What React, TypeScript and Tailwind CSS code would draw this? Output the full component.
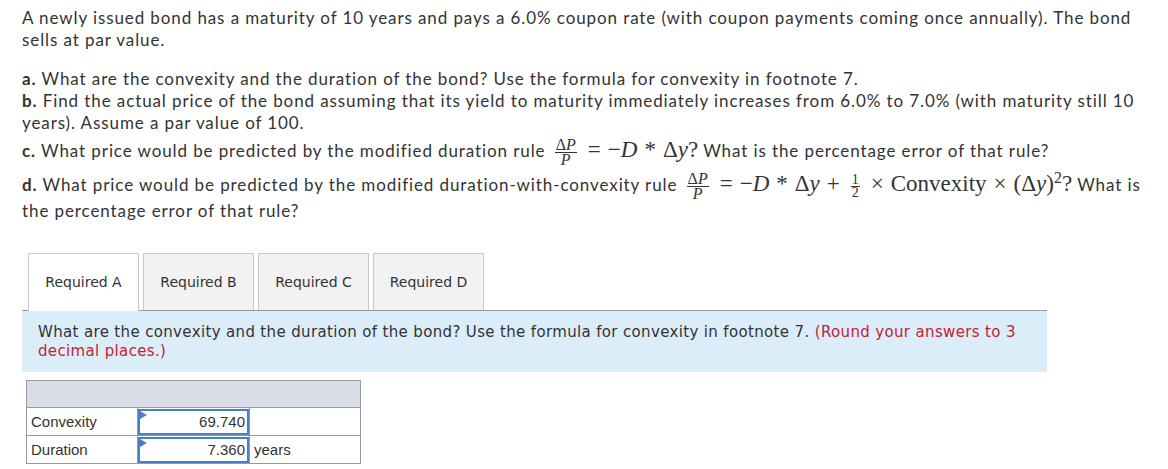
import React from "react";

const sans = "font-['Lato','Liberation_Sans',sans-serif]";
const serif = "font-['Liberation_Serif','DejaVu_Serif',serif]";

function Frac({ top, bottom, small = false }: { top: React.ReactNode; bottom: React.ReactNode; small?: boolean }) {
  return (
    <span
      className={`inline-flex flex-col items-center align-middle mx-[4px] tracking-normal ${serif} ${
        small ? "text-[14px] leading-[12px]" : "text-[16px] leading-[14px]"
      }`}
    >
      <span className="border-b border-[#333] px-[1px]">{top}</span>
      <span className="px-[1px]">{bottom}</span>
    </span>
  );
}

function DeltaP() {
  return <Frac top={<>Δ<i>P</i></>} bottom={<i>P</i>} />;
}

function Op({ children }: { children: React.ReactNode }) {
  return <span className="mx-[7px]">{children}</span>;
}

const TABS = ["Required A", "Required B", "Required C", "Required D"];

export default function App() {
  return (
    <div className="w-[1168px] h-[469px] overflow-hidden bg-white text-[#333]">
      <div className={`pl-[22px] pr-[10px] pt-[7px] text-[17px] leading-[22px] tracking-[0.9px] ${sans}`}>
        <p>
          A newly issued bond has a maturity of 10 years and pays a 6.0% coupon rate (with coupon payments coming once annually). The bond
          <br />
          sells at par value.
        </p>

        <div className="mt-[17px]">
          <div className="whitespace-nowrap">
            <b>a.</b> What are the convexity and the duration of the bond? Use the formula for convexity in footnote 7.
          </div>
          <div className="whitespace-nowrap">
            <b>b.</b> Find the actual price of the bond assuming that its yield to maturity immediately increases from 6.0% to 7.0% (with maturity still 10
          </div>
          <div>years). Assume a par value of 100.</div>
          <div className="leading-[32px] whitespace-nowrap">
            <b>c.</b> What price would be predicted by the modified duration rule <DeltaP />
            <span className={`${serif} text-[23px] tracking-normal`}>
              <Op>=</Op>−<i>D</i>
              <Op>*</Op>Δ<i>y</i>?
            </span>{" "}
            What is the percentage error of that rule?
          </div>
          <div className="leading-[33px] whitespace-nowrap">
            <b>d.</b> What price would be predicted by the modified duration-with-convexity rule <DeltaP />
            <span className={`${serif} text-[23px] tracking-normal`}>
              <Op>=</Op>−<i>D</i>
              <Op>*</Op>Δ<i>y</i>
              <Op>+</Op>
            </span>
            <Frac top="1" bottom="2" small />
            <span className={`${serif} text-[23px] tracking-normal`}>
              <Op>×</Op>Convexity<Op>×</Op>(Δ<i>y</i>)<sup className="text-[16px]">2</sup>?
            </span>{" "}
            What is
          </div>
          <div className="leading-[20px]">the percentage error of that rule?</div>
        </div>
      </div>

      <div className="mt-[32px] pl-[22px] font-['DejaVu_Sans','Verdana',sans-serif]">
        <div className="flex gap-[4px] pl-[6px] relative z-10">
          {TABS.map((t, i) => (
            <div
              key={t}
              className={`w-[111px] flex items-center justify-center text-[14px] border border-b-0 border-[#c8c8c8] ${
                i === 0 ? "bg-white -mb-px h-[58px]" : "bg-[#f2f2f2] h-[57px]"
              }`}
            >
              {t}
            </div>
          ))}
        </div>
        <div className="w-[1025px] border-t border-[#999] bg-[#dbedf9] pl-[16px] pr-[18px] pt-[12px] pb-[11px] text-[15px] tracking-[0.35px] leading-[19px] text-[#333]">
          What are the convexity and the duration of the bond? Use the formula for convexity in footnote 7.{" "}
          <span className="text-[#c8202f]">(Round your answers to 3 decimal places.)</span>
        </div>
      </div>

      <table className="mt-[8px] ml-[26px] border-collapse font-['Liberation_Sans',Arial,sans-serif] text-[15px] text-[#333]">
        <tbody>
          <tr className="h-[27px] bg-[#d9dde7]">
            <td colSpan={3} className="border border-[#999]" />
          </tr>
          <tr className="h-[28px]">
            <td className="w-[111px] border border-[#999] pl-[4px]">Convexity</td>
            <td className="w-[112px] border border-[#999] p-0">
              <div className="relative h-[26px] border-2 border-[#4a7fc1] text-right pr-[2px] leading-[22px]">
                <span className="absolute left-0 top-0 w-0 h-0 border-y-[4px] border-y-transparent border-l-[7px] border-l-[#4a7fc1]" />
                69.740
              </div>
            </td>
            <td className="w-[111px] border border-[#999] pl-[4px]" />
          </tr>
          <tr className="h-[28px]">
            <td className="border border-[#999] pl-[4px]">Duration</td>
            <td className="border border-[#999] p-0">
              <div className="relative h-[26px] border-2 border-[#4a7fc1] text-right pr-[2px] leading-[22px]">
                <span className="absolute left-0 top-0 w-0 h-0 border-y-[4px] border-y-transparent border-l-[7px] border-l-[#4a7fc1]" />
                7.360
              </div>
            </td>
            <td className="border border-[#999] pl-[4px]">years</td>
          </tr>
        </tbody>
      </table>
    </div>
  );
}
